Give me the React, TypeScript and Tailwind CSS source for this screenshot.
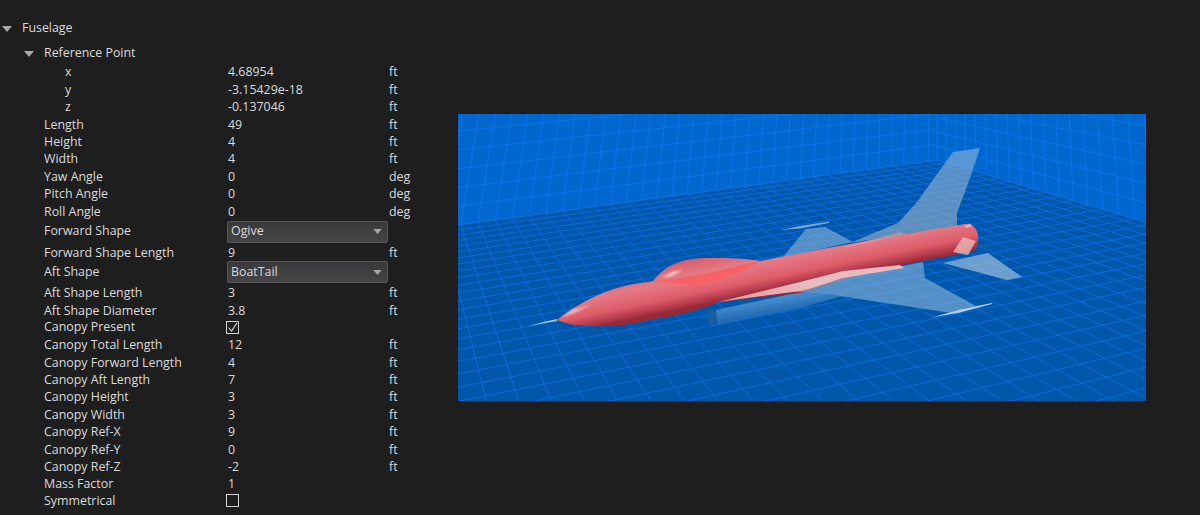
import React from 'react'

type Row = {
  label: string
  value?: string
  unit?: string
  indent?: 'child'
  kind?: 'select' | 'check'
  checked?: boolean
}

const rows: Row[] = [
  { label: 'x', value: '4.68954', unit: 'ft', indent: 'child' },
  { label: 'y', value: '-3.15429e-18', unit: 'ft', indent: 'child' },
  { label: 'z', value: '-0.137046', unit: 'ft', indent: 'child' },
  { label: 'Length', value: '49', unit: 'ft' },
  { label: 'Height', value: '4', unit: 'ft' },
  { label: 'Width', value: '4', unit: 'ft' },
  { label: 'Yaw Angle', value: '0', unit: 'deg' },
  { label: 'Pitch Angle', value: '0', unit: 'deg' },
  { label: 'Roll Angle', value: '0', unit: 'deg' },
  { label: 'Forward Shape', value: 'Ogive', kind: 'select' },
  { label: 'Forward Shape Length', value: '9', unit: 'ft' },
  { label: 'Aft Shape', value: 'BoatTail', kind: 'select' },
  { label: 'Aft Shape Length', value: '3', unit: 'ft' },
  { label: 'Aft Shape Diameter', value: '3.8', unit: 'ft' },
  { label: 'Canopy Present', kind: 'check', checked: true },
  { label: 'Canopy Total Length', value: '12', unit: 'ft' },
  { label: 'Canopy Forward Length', value: '4', unit: 'ft' },
  { label: 'Canopy Aft Length', value: '7', unit: 'ft' },
  { label: 'Canopy Height', value: '3', unit: 'ft' },
  { label: 'Canopy Width', value: '3', unit: 'ft' },
  { label: 'Canopy Ref-X', value: '9', unit: 'ft' },
  { label: 'Canopy Ref-Y', value: '0', unit: 'ft' },
  { label: 'Canopy Ref-Z', value: '-2', unit: 'ft' },
  { label: 'Mass Factor', value: '1' },
  { label: 'Symmetrical', kind: 'check' },
]

function Caret({ className }: { className: string }) {
  return (
    <svg viewBox="0 0 10 6" className={className}>
      <polygon points="0,0 10,0 5,6" fill="#a8a8a8" />
    </svg>
  )
}

function PropRow({ row }: { row: Row }) {
  let height = 'h-[17.4px]'
  if (row.kind === 'select') height = 'h-[22px] mb-[1.5px]'
  if (row.kind === 'check') height = row.checked ? 'h-[17px] pb-px' : 'h-[15px]'
  return (
    <div className={`flex items-center ${height}`}>
      <div className={`w-[228px] shrink-0 ${row.indent ? 'pl-[65px]' : 'pl-[44px]'}`}>{row.label}</div>
      {row.kind === 'select' && (
        <div className="flex items-center justify-between w-[161px] h-[22px] -ml-px pl-[3px] pr-[3px] rounded-[2px] border border-[#58585a] bg-gradient-to-b from-[#39393b] to-[#454547]">
          <span>{row.value}</span>
          <Caret className="w-[9px] h-[5px] mr-[2px]" />
        </div>
      )}
      {row.kind === 'check' && (
        <div className="flex items-center justify-center w-[13px] h-[13px] -ml-[2px] border border-[#d4d4d4]">
          {row.checked && (
            <svg viewBox="0 0 11 11" className="w-[11px] h-[11px]">
              <path d="M1.5 5.5 L4.5 9 L10 1" fill="none" stroke="#dcdcdc" strokeWidth="1.1" />
            </svg>
          )}
        </div>
      )}
      {!row.kind && <div className="w-[161px] shrink-0">{row.value}</div>}
      {row.unit && <div>{row.unit}</div>}
    </div>
  )
}

// floor and wall grids come out of two vanishing points
const O = { x: 937, y: 160 }
const VA = { x: 3208, y: -149 }
const VB = { x: 385, y: -4 }
const VV = { x: 937, y: -2650 }

const proj = (s: number, t: number) => {
  const d = 1 - s - t
  return { x: (O.x - s * VA.x - t * VB.x) / d, y: (O.y - s * VA.y - t * VB.y) / d }
}
const extend = (a: { x: number; y: number }, b: { x: number; y: number }, k: number) => ({
  x: a.x + (b.x - a.x) * k,
  y: a.y + (b.y - a.y) * k,
})

const sStep = 0.0053
const sPhase = 0.0038
const tStep = 0.0165

const floorLines: string[] = []
for (let i = 0; i < 40; i++) {
  const p = proj(sPhase + i * sStep, 0)
  const q = extend(VB, p, 4)
  floorLines.push(`M${p.x} ${p.y}L${q.x} ${q.y}`)
}
for (let i = 1; i < 32; i++) {
  const p = proj(0, i * tStep)
  const q = extend(VA, p, 2)
  floorLines.push(`M${p.x} ${p.y}L${q.x} ${q.y}`)
}

const wallLines: string[] = []
for (let i = 1; i < 12; i++) {
  const left = extend(VA, { x: O.x, y: O.y - i * 15.5 }, 1.3)
  wallLines.push(`M${O.x} ${O.y - i * 15.5}L${left.x} ${left.y}`)
  const right = extend(VB, { x: O.x, y: O.y - i * 14 }, 1.6)
  wallLines.push(`M${O.x} ${O.y - i * 14}L${right.x} ${right.y}`)
}
for (let i = 0; i < 34; i++) {
  const p = proj(sPhase + i * sStep, 0)
  const q = extend(VV, p, 0.9)
  wallLines.push(`M${p.x} ${p.y}L${q.x} ${q.y}`)
}
for (let i = 0; i < 18; i++) {
  const p = proj(0, i * tStep)
  const q = extend(VV, p, 0.9)
  wallLines.push(`M${p.x} ${p.y}L${q.x} ${q.y}`)
}

function JetScene() {
  return (
    <svg viewBox="458 114 688 287" className="w-[688px] h-[287px] block">
      <defs>
        <linearGradient id="body" gradientUnits="userSpaceOnUse" x1="757" y1="243" x2="767" y2="292">
          <stop offset="0" stopColor="#dc6472" />
          <stop offset="0.42" stopColor="#e47a86" />
          <stop offset="0.74" stopColor="#de5c6a" />
          <stop offset="0.95" stopColor="#a83242" />
          <stop offset="1" stopColor="#942a3a" />
        </linearGradient>
        <linearGradient id="canopy" gradientUnits="userSpaceOnUse" x1="705" y1="257" x2="710" y2="280">
          <stop offset="0" stopColor="#d9606e" />
          <stop offset="1" stopColor="#e88a94" />
        </linearGradient>
        <linearGradient id="tube" gradientUnits="userSpaceOnUse" x1="760" y1="298" x2="763" y2="316">
          <stop offset="0" stopColor="#6aa8dc" />
          <stop offset="1" stopColor="#2a70b4" />
        </linearGradient>
        <linearGradient id="tail" gradientUnits="userSpaceOnUse" x1="975" y1="150" x2="900" y2="240">
          <stop offset="0" stopColor="#8ab4dc" />
          <stop offset="1" stopColor="#9ab0c4" />
        </linearGradient>
        <linearGradient id="strip" gradientUnits="userSpaceOnUse" x1="718" y1="300" x2="900" y2="266">
          <stop offset="0" stopColor="#e4939c" />
          <stop offset="0.5" stopColor="#e8bcc0" />
          <stop offset="1" stopColor="#e8b8bc" />
        </linearGradient>
        <filter id="soft" x="-30%" y="-50%" width="160%" height="200%">
          <feGaussianBlur stdDeviation="1.1" />
        </filter>
        <clipPath id="floor">
          <polygon points="458,225 937,160 1146,222 1146,401 458,401" />
        </clipPath>
      </defs>

      <rect x="458" y="114" width="688" height="287" fill="#0067ce" />
      <path d={wallLines.join('')} stroke="#0876ea" strokeWidth="1" fill="none" />
      <polygon points="458,225 937,160 1146,222 1146,401 458,401" fill="#0056a9" />
      <path d={floorLines.join('')} stroke="#0a6cda" strokeWidth="1" fill="none" clipPath="url(#floor)" />
      <path d="M458 225L937 160L1146 222" stroke="#0a74e6" strokeWidth="1" fill="none" />

      {/* nose probe */}
      <polygon points="527,326.5 545,321.5 557,319 557,321 545,323" fill="#a8c0d4" />

      {/* ventral tube */}
      <polygon points="716,310 800,292 842,296 800,308 717,325" fill="url(#tube)" opacity="0.72" />
      <ellipse cx="712" cy="317" rx="5" ry="7" fill="#1f5f9c" opacity="0.9" />

      {/* far wing and fin */}
      <polygon points="783,257 806,229 825,227 853,242" fill="#8fb6da" opacity="0.6" />
      <polygon points="780,230 800,226 829,221.5 829,223 800,228.5" fill="#8eb4d2" opacity="0.85" />
      <polygon points="953,152 980,148 970,178 957,213 957,226 850,243 898,223 917,202" fill="url(#tail)" opacity="0.62" />
      <polygon points="943,263 988,253 1022,277 1007,280" fill="#9cbfdc" opacity="0.7" />

      {/* fuselage */}
      <path
        d="M557 320 C570 310 590 296 617 288 C630 284 642 283 653 281 L760 261 C800 253 880 238 965 224 C975 223 979 232 978 241 C977 248 975 252 970 252 C930 260 880 268 843 279 C825 285 810 290 800 293 L718 302 C705 309 680 315 650 320 C630 325 610 327 590 326 C575 326 565 323 557 320 Z"
        fill="url(#body)"
      />
      {/* canopy */}
      <path
        d="M653 281 C660 272 668 266 677 263 C690 258 700 258 715 258 C735 258 750 259 760 261 C750 267 745 271 737 274 C725 280 715 282 700 285 C685 285 665 283 653 281 Z"
        fill="url(#canopy)"
      />
      <path d="M653 281 C670 280 695 276 717 271 C735 267 750 263 760 261 C750 267 745 271 737 274 C725 280 715 282 700 285 C685 285 665 283 653 281 Z" fill="#f76266" />

      {/* highlights */}
      <polygon points="560,318 572,310 591,305 574,313" fill="#f6d0d4" opacity="0.85" filter="url(#soft)" />
      <polygon points="661,278 672,272 683,270 672,276" fill="#f8dcdf" opacity="0.85" filter="url(#soft)" />

      {/* near wing over the body */}
      <polygon points="923,262 925,278 976,306 948,312.5 833,295 790,291 850,276" fill="#a2c4e0" opacity="0.52" />
      <polygon points="718,302 800,282 843,271 900,265 904,268 843,278 812,288 800,291" fill="url(#strip)" />
      <polygon points="932,317.5 960,309.5 992,303 992,304 960,312.5" fill="#b4d0e8" />
      <polygon points="953,252 963,237 976,241 968,255" fill="#ecb8b8" opacity="0.8" />
      <polygon points="843,247 900,232 906,234 850,247" fill="#eba0a8" opacity="0.5" />
      <polygon points="964,226 970,224 972,226 966,228" fill="#f0b0b4" />
    </svg>
  )
}

export default function App() {
  return (
    <div className="flex w-[1200px] h-[515px] overflow-hidden bg-[#1e1e1f] text-[#dadada] text-[12.4px] leading-none font-['Open_Sans','Liberation_Sans',sans-serif]">
      <div className="w-[458px] shrink-0 pt-[20px]">
        <div className="flex items-center h-[17px]">
          <Caret className="w-[10px] h-[6px] ml-[2px] mr-[10px]" />
          <span>Fuselage</span>
        </div>
        <div className="flex items-center h-[17px] mt-[8px]">
          <Caret className="w-[10px] h-[6px] ml-[24px] mr-[10px]" />
          <span>Reference Point</span>
        </div>
        <div className="mt-[2px]">
          {rows.map(r => (
            <PropRow key={r.label} row={r} />
          ))}
        </div>
      </div>
      <div className="pt-[114px]">
        <JetScene />
      </div>
    </div>
  )
}
